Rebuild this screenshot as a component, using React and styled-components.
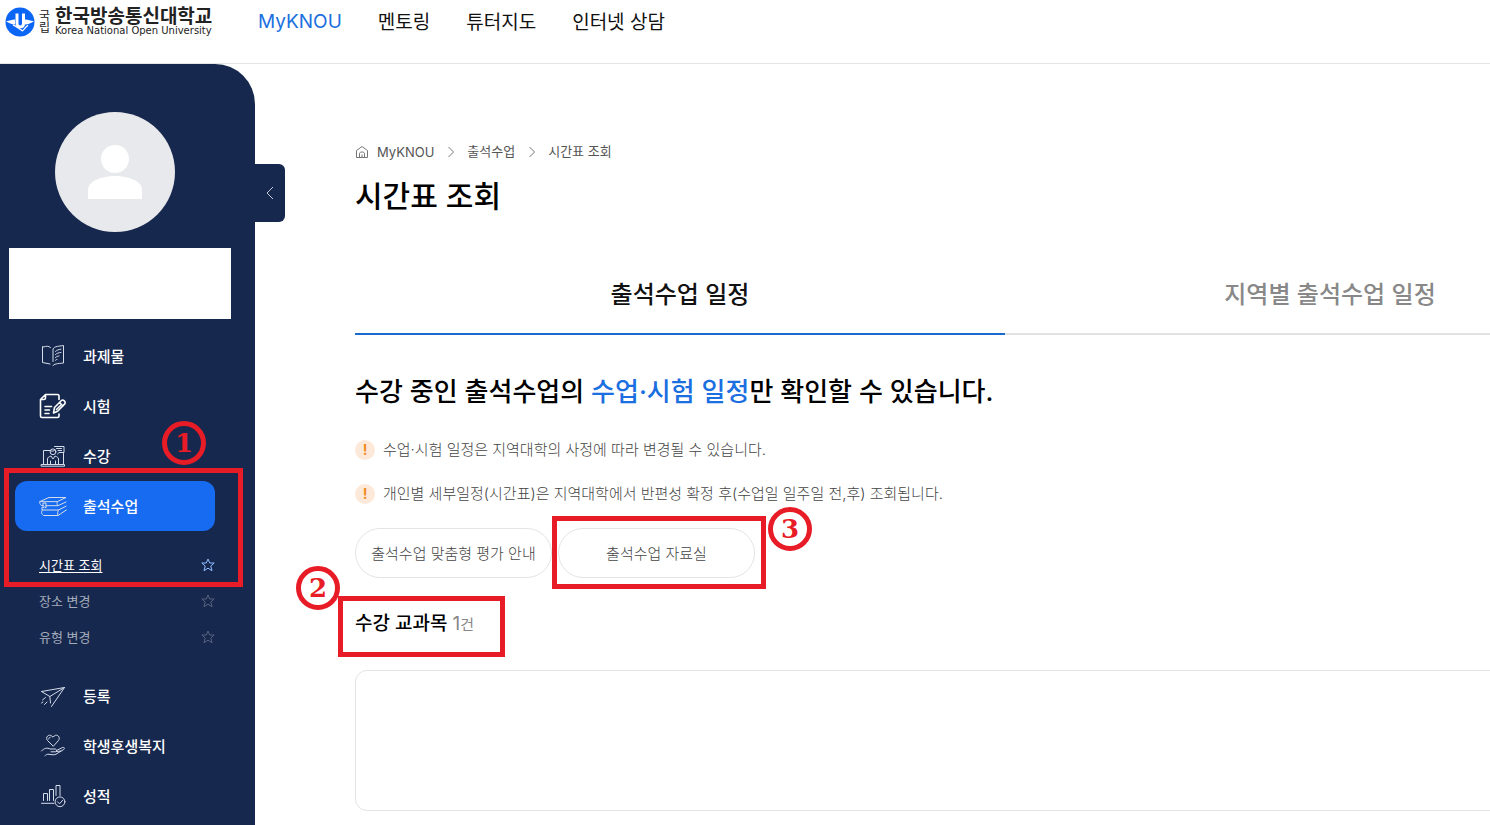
import React from "react";
import styled, { createGlobalStyle, css } from "styled-components";

const GlobalStyle = createGlobalStyle`
  * {
    box-sizing: border-box;
  }

  body {
    margin: 0;
    background: #fff;
    color: #000;
    font-family: Inter, "Noto Sans CJK KR", sans-serif;
  }

  a {
    color: inherit;
    text-decoration: none;
  }

  button {
    font-family: inherit;
    cursor: pointer;
  }

  ul, ol {
    list-style: none;
    margin: 0;
    padding: 0;
  }
`;

/* ---------- header ---------- */

const Header = styled.header`
  display: flex;
  align-items: flex-start;
  height: 64px;
  padding-left: 5px;
  border-bottom: 1px solid #e5e5e5;
`;

const Logo = styled.a`
  display: flex;
  align-items: center;
  width: 253px;
  height: 44px;
  color: #222;
`;

const LogoPrefix = styled.span`
  width: 12px;
  margin: 0 4px;
  font-size: 12px;
  line-height: 12px;
`;

const LogoText = styled.span`
  display: flex;
  flex-direction: column;
`;

const LogoName = styled.strong`
  font-size: 19px;
  font-weight: 700;
  line-height: 18px;
  white-space: nowrap;
`;

const LogoSub = styled.span`
  font-family: "DejaVu Sans", sans-serif;
  font-size: 10px;
  line-height: 10px;
  white-space: nowrap;
`;

const TopNav = styled.nav`
  display: flex;
  gap: 36px;
`;

const TopLink = styled.a`
  font-size: 19px;
  line-height: ${(p) => (p.$active ? 44 : 46)}px;
  color: ${(p) => (p.$active ? "#1b6fe0" : "#111")};
  white-space: nowrap;
`;

/* ---------- sidebar ---------- */

const Body = styled.div`
  display: flex;
  min-height: calc(100vh - 64px);
  overflow: hidden;
`;

const Sidebar = styled.aside`
  position: relative;
  flex: 0 0 255px;
  padding-top: 48px;
  background: #17284e;
  border-top-right-radius: 40px;
`;

const FoldButton = styled.button`
  position: absolute;
  top: 100px;
  left: 100%;
  display: flex;
  align-items: center;
  justify-content: center;
  width: 30px;
  height: 58px;
  padding: 0;
  border: 0;
  border-radius: 0 6px 6px 0;
  background: #17284e;
`;

const Avatar = styled.div`
  width: 120px;
  height: 120px;
  margin-left: 55px;
  border-radius: 50%;
  background: #e8e9ec;
`;

const UserBox = styled.div`
  height: 71px;
  margin: 16px 24px 12px 9px;
  background: #fff;
`;

const Menu = styled.ul`
  padding: 0 40px 0 15px;
`;

const MenuItem = styled.li`
  position: relative;
`;

const MenuLink = styled.a`
  display: flex;
  align-items: center;
  gap: 16px;
  height: 50px;
  padding-left: 24px;
  border-radius: 12px;
  color: #fff;
  font-size: 15px;
  font-weight: 500;
  ${(p) =>
    p.$active &&
    css`
      background: #166bf0;
    `}
`;

const MenuLabel = styled.span`
  padding-bottom: 2px;
`;

const SubMenu = styled.ul`
  padding: 16px 0 16px 24px;
`;

const SubItem = styled.li`
  display: flex;
  align-items: center;
  justify-content: space-between;
  height: 36px;
`;

const SubLink = styled.a`
  font-size: 13px;
  line-height: 20px;
  color: ${(p) => (p.$active ? "#fff" : "#a4abbb")};
  text-decoration: ${(p) => (p.$active ? "underline" : "none")};
  text-underline-offset: 2px;
`;

const StarButton = styled.button`
  display: flex;
  padding: 0;
  border: 0;
  background: none;
  color: ${(p) => (p.$active ? "#8fbcff" : "#56627e")};
`;

/* ---------- content ---------- */

const Main = styled.main`
  flex: 1;
  min-width: 0;
  padding: 76px 0 15px 100px;
`;

const Content = styled.div`
  min-width: 1300px;
`;

const Breadcrumb = styled.ol`
  display: flex;
  align-items: center;
  height: 24px;
  font-size: 13px;
  line-height: 20px;
  color: #555;
`;

const Crumb = styled.li`
  display: flex;
  align-items: center;
  gap: ${(p) => (p.$home ? 8 : 12)}px;
  margin-right: 13px;

  a {
    padding-bottom: ${(p) => (p.$home ? 0 : 2)}px;
  }
`;

const PageTitle = styled.h1`
  margin: 12px 0 44px;
  font-size: 30px;
  line-height: 40px;
  font-weight: 500;
`;

const Tabs = styled.div`
  display: flex;
`;

const Tab = styled.button`
  flex: 1;
  height: 75px;
  padding: 0 0 8px;
  border: 0;
  border-bottom: 2px solid ${(p) => (p.$active ? "#1c6ad0" : "#e2e2e2")};
  background: none;
  color: ${(p) => (p.$active ? "#111" : "#888")};
  font-size: 24px;
  font-weight: 500;
`;

const Headline = styled.h2`
  margin: 37px 0 28px;
  font-size: 26px;
  line-height: 40px;
  font-weight: 500;

  em {
    font-style: normal;
    color: #1b6fe0;
  }
`;

const Notices = styled.ul`
  display: grid;
  gap: 24px;
`;

const Notice = styled.li`
  display: flex;
  align-items: center;
  gap: 8px;
  font-size: 15px;
  line-height: 20px;
  font-weight: 300;
  color: #444;
`;

const NoticeMark = styled.span`
  width: 20px;
  height: 20px;
  border-radius: 50%;
  background: #fde9d9;
  color: #f08c1e;
  font-size: 14px;
  font-weight: 700;
  text-align: center;
`;

const Actions = styled.div`
  display: flex;
  gap: 6px;
  margin-top: 24px;
`;

const ActionItem = styled.div`
  position: relative;
`;

const PillButton = styled.button`
  width: 197px;
  height: 50px;
  padding: 0 0 2px;
  border: 1px solid #e4e4e4;
  border-radius: 25px;
  background: #fff;
  color: #444;
  font-size: 15px;
  font-weight: 300;
  white-space: nowrap;
`;

const CountRow = styled.div`
  position: relative;
  width: max-content;
  margin: 29px 0;
`;

const Count = styled.h3`
  margin: 0;
  font-size: 19px;
  line-height: 33px;
  font-weight: 500;

  span {
    color: #888;
    font-weight: 400;
  }

  small {
    font-size: 15px;
  }
`;

const Card = styled.section`
  height: 141px;
  border: 1px solid #e4e4e4;
  border-radius: 12px;
`;

/* ---------- step marks, drawn over the page ---------- */

const Frame = styled.div`
  position: absolute;
  z-index: 1;
  inset: ${(p) => p.$inset};
  border: 5px solid #e81c26;
  pointer-events: none;
`;

const Step = styled.span`
  position: absolute;
  z-index: 2;
  top: ${(p) => p.$top}px;
  left: ${(p) => p.$left}px;
  width: 44px;
  height: 44px;
  border: 5px solid #e81c26;
  border-radius: 50%;
  color: #e81c26;
  font-family: "DejaVu Serif", serif;
  font-size: 26px;
  font-weight: 700;
  line-height: 34px;
  text-align: center;
`;

const LogoMark = () => (
  <svg width="30" height="30" viewBox="0 0 30 30" aria-hidden="true">
    <circle cx="15" cy="15" r="14.5" fill="#0b66f5" />
    <path
      d="M1 14.200c4-.2 5.500-1.700 9-1.700v5c-3.500-.3-6-1.300-9-3.300zM29 14.200c-4-.2-5.500-1.700-9-1.700v5c3.500-.3 6-1.300 9-3.300z"
      fill="#fff"
    />
    <path
      d="M12 6.500v10c0 4.500 6.500 4.500 6.500 0v-10"
      fill="none"
      stroke="#fff"
      strokeWidth="3"
    />
    <path
      d="M8 18c3 .8 5.500 3.800 9.500 5.800 2-1.500 3-3.800 5.500-5.500"
      fill="none"
      stroke="#fff"
      strokeWidth="1.300"
    />
  </svg>
);

const LineIcon = ({ children, bold }) => (
  <svg
    width="28"
    height="28"
    viewBox="0 0 28 28"
    fill="none"
    stroke={bold ? "#fff" : "#d5dcea"}
    strokeWidth={bold ? 1.6 : 1}
    strokeLinecap="round"
    strokeLinejoin="round"
    aria-hidden="true"
  >
    {children}
  </svg>
);

const BookIcon = () => (
  <LineIcon>
    <path d="M11 22L3.500 20.500V4.500L5 5c2-1 4.500-1.200 6.500.5M14 23.700c1-2 4-2 10.500-2.700V3.500C18 4.500 14 4.500 14 8v11.500" />
    <path d="M16.500 9.500c1.500-1.500 3-2 5.500-2.300M16.500 12.500c1.500-1.300 3-1.800 5.500-2.100M16.500 15.500c1.200-1 2-1.300 3.500-1.600M16.500 18.200c.5-.5 1-.7 1.500-.8" />
  </LineIcon>
);

const ExamIcon = () => (
  <LineIcon bold>
    <path d="M20 7.500V4c0-1-.5-1.500-1.500-1.500h-12l-5 5V24c0 1 .5 1.500 1.500 1.500h15.500c1 0 1.500-.5 1.500-1.500v-2M6.500 2.500v3.500c0 1-.5 1.500-1.500 1.500H1.500M6 14.500h6.500M6 18h4.500M6 21.500h4" />
    <path d="M14.500 21l1-5.500 7.200-7.200c1.500-1 4.300 1.500 3.300 3.300l-7.400 7.600zM20.500 10.500l3.500 3.500M17.500 17.500l4-4" />
  </LineIcon>
);

const LectureIcon = () => (
  <LineIcon>
    <path d="M2.500 22.500h23v1.700h-23zM4.500 22V8.500h7M24.500 22V11.500" />
    <path d="M15.500 4.500h9.500v6h-5l-1.500 1.500M17.500 6.500h5M19 8.500h3.500" />
    <circle cx="14" cy="9.800" r="2.900" />
    <path d="M8.500 22v-5c0-1.500 1.500-2.300 3.500-3l2 3 2-3c2 .7 3.500 1.500 3.500 3v5M11.500 22v-3M16.500 22v-3M12 9c1.500.5 3 0 4-1" />
  </LineIcon>
);

const BooksIcon = () => (
  <LineIcon>
    <path d="M1 9.500L10 5.500H27L18.500 9.500zM1 9.500c-.8 1.500 0 3 1.500 4h1.500M7 13.700h12L27 10M18.500 9.500c-.8 1.200-.8 3 .5 4.200" />
    <path d="M4 11.500v4.500l1.500-1 1.500 1v-4.500zM3 15.500v2.500h16.500L27 14.200M3.500 18c-1.500 1.500-1.200 4.200 1 5.500h14.500L27.300 18M19.500 18c-1 1.500-1.200 4-.5 5.500" />
  </LineIcon>
);

const PlaneIcon = () => (
  <LineIcon>
    <path d="M2.500 9.500L25.500 5.500 12.500 24.500M2.500 9.500l8.300 5L25.500 5.500M10.800 14.500l.7 6.500M3.500 18l3-2.500M2.500 21l1.500-1M5.500 22.500l2.500-2.500" />
  </LineIcon>
);

const CareIcon = () => (
  <LineIcon>
    <path d="M14 14L8.500 8.500C6 5.500 9.500 1.500 12.800 4L14 5.200 15.200 4c3.300-2.500 6.800 1.500 4.300 4.500zM9.700 7c0-1 .6-1.700 1.500-1.800" />
    <path d="M2.500 19c2.500-3 6-3.500 8.500-2h5c2 0 2 2.800 0 2.800h-4M17.500 18.500l6-3c1.700-.6 2.600.8 1.200 2L17 22.200c-1 .5-2 .7-3 .6l-5-.6c-1 0-2 .7-3 1.500M17.500 19.500l4.500-.5" />
  </LineIcon>
);

const GradeIcon = () => (
  <LineIcon>
    <path d="M4.500 18.500V11.500h4v7M10.500 18.500V7.500h4v11M17 13.500V3.500h4V13.500M2.500 21.300H15" />
    <circle cx="21" cy="19.800" r="4.900" />
    <path d="M18.500 19.800l2 2 3.200-3.600" />
  </LineIcon>
);

const StarIcon = () => (
  <svg width="14" height="14" viewBox="0 0 14 14" fill="none" aria-hidden="true">
    <path
      d="M7 1l1.700 4h4.500L9.800 8l1.200 4.700L7 10.200 3 12.700 4.200 8 .8 5h4.500z"
      stroke="currentColor"
      strokeLinejoin="round"
    />
  </svg>
);

const Chevron = () => (
  <svg width="8" height="12" viewBox="0 0 8 12" fill="none" aria-hidden="true">
    <path d="M1.500 1l5 5-5 5" stroke="#777" />
  </svg>
);

const HomeIcon = () => (
  <svg width="14" height="14" viewBox="0 0 14 14" fill="none" aria-hidden="true">
    <path
      d="M1.500 5.500L7 1.500l5.500 4v7h-11zM4.500 12.500v-4c0-2 5-2 5 0v4M7 9.500v3"
      stroke="#777"
    />
  </svg>
);

const topLinks = ["MyKNOU", "멘토링", "튜터지도", "인터넷 상담"];

const menu = [
  { label: "과제물", Icon: BookIcon },
  { label: "시험", Icon: ExamIcon },
  { label: "수강", Icon: LectureIcon },
  {
    label: "출석수업",
    Icon: BooksIcon,
    children: ["시간표 조회", "장소 변경", "유형 변경"],
  },
  { label: "등록", Icon: PlaneIcon },
  { label: "학생후생복지", Icon: CareIcon },
  { label: "성적", Icon: GradeIcon },
];

const notices = [
  "수업·시험 일정은 지역대학의 사정에 따라 변경될 수 있습니다.",
  "개인별 세부일정(시간표)은 지역대학에서 반편성 확정 후(수업일 일주일 전,후) 조회됩니다.",
];

const SideMenu = () => (
  <Menu>
    {menu.map(({ label, Icon, children }) => (
      <MenuItem key={label}>
        <MenuLink href="#" $active={!!children}>
          <Icon />
          <MenuLabel>{label}</MenuLabel>
        </MenuLink>
        {children && (
          <>
            <SubMenu>
              {children.map((name, i) => (
                <SubItem key={name}>
                  <SubLink href="#" $active={i === 0}>
                    {name}
                  </SubLink>
                  <StarButton $active={i === 0} aria-label={`${name} 즐겨찾기`}>
                    <StarIcon />
                  </StarButton>
                </SubItem>
              ))}
            </SubMenu>
            <Frame $inset="-13px -28px 84px -11px" />
            <Step $top={-60} $left={147}>
              1
            </Step>
          </>
        )}
      </MenuItem>
    ))}
  </Menu>
);

export default function App() {
  return (
    <>
      <GlobalStyle />
      <Header>
        <Logo href="#">
          <LogoMark />
          <LogoPrefix>국립</LogoPrefix>
          <LogoText>
            <LogoName>한국방송통신대학교</LogoName>
            <LogoSub>Korea National Open University</LogoSub>
          </LogoText>
        </Logo>
        <TopNav>
          {topLinks.map((name, i) => (
            <TopLink key={name} href="#" $active={i === 0}>
              {name}
            </TopLink>
          ))}
        </TopNav>
      </Header>

      <Body>
        <Sidebar>
          <Avatar>
            <svg width="120" height="120" viewBox="0 0 120 120" aria-hidden="true">
              <circle cx="60" cy="47" r="14" fill="#fff" />
              <path d="M33 87V78c0-9 14-14 27-14s27 5 27 14v9z" fill="#fff" />
            </svg>
          </Avatar>
          <UserBox />
          <SideMenu />
          <FoldButton aria-label="메뉴 접기">
            <svg width="8" height="14" viewBox="0 0 8 14" fill="none">
              <path d="M7 1L1 7l6 6" stroke="#c5cad6" />
            </svg>
          </FoldButton>
        </Sidebar>

        <Main>
          <Content>
            <Breadcrumb>
              <Crumb $home>
                <HomeIcon />
                <a href="#">MyKNOU</a>
              </Crumb>
              <Crumb>
                <Chevron />
                <a href="#">출석수업</a>
              </Crumb>
              <Crumb>
                <Chevron />
                <a href="#">시간표 조회</a>
              </Crumb>
            </Breadcrumb>
            <PageTitle>시간표 조회</PageTitle>

            <Tabs role="tablist">
              <Tab role="tab" aria-selected="true" $active>
                출석수업 일정
              </Tab>
              <Tab role="tab" aria-selected="false">
                지역별 출석수업 일정
              </Tab>
            </Tabs>

            <Headline>
              수강 중인 출석수업의 <em>수업·시험 일정</em>만 확인할 수 있습니다.
            </Headline>
            <Notices>
              {notices.map((text) => (
                <Notice key={text}>
                  <NoticeMark>!</NoticeMark>
                  {text}
                </Notice>
              ))}
            </Notices>

            <Actions>
              <ActionItem>
                <PillButton>출석수업 맞춤형 평가 안내</PillButton>
              </ActionItem>
              <ActionItem>
                <PillButton>출석수업 자료실</PillButton>
                <Frame $inset="-12px -11px -11px -6px" />
                <Step $top={-21} $left={210}>
                  3
                </Step>
              </ActionItem>
            </Actions>

            <CountRow>
              <Count>
                수강 교과목{" "}
                <span>
                  1<small>건</small>
                </span>
              </Count>
              <Frame $inset="-11px -31px -16px -17px" />
              <Step $top={-41} $left={-59}>
                2
              </Step>
            </CountRow>
            <Card />
          </Content>
        </Main>
      </Body>
    </>
  );
}
